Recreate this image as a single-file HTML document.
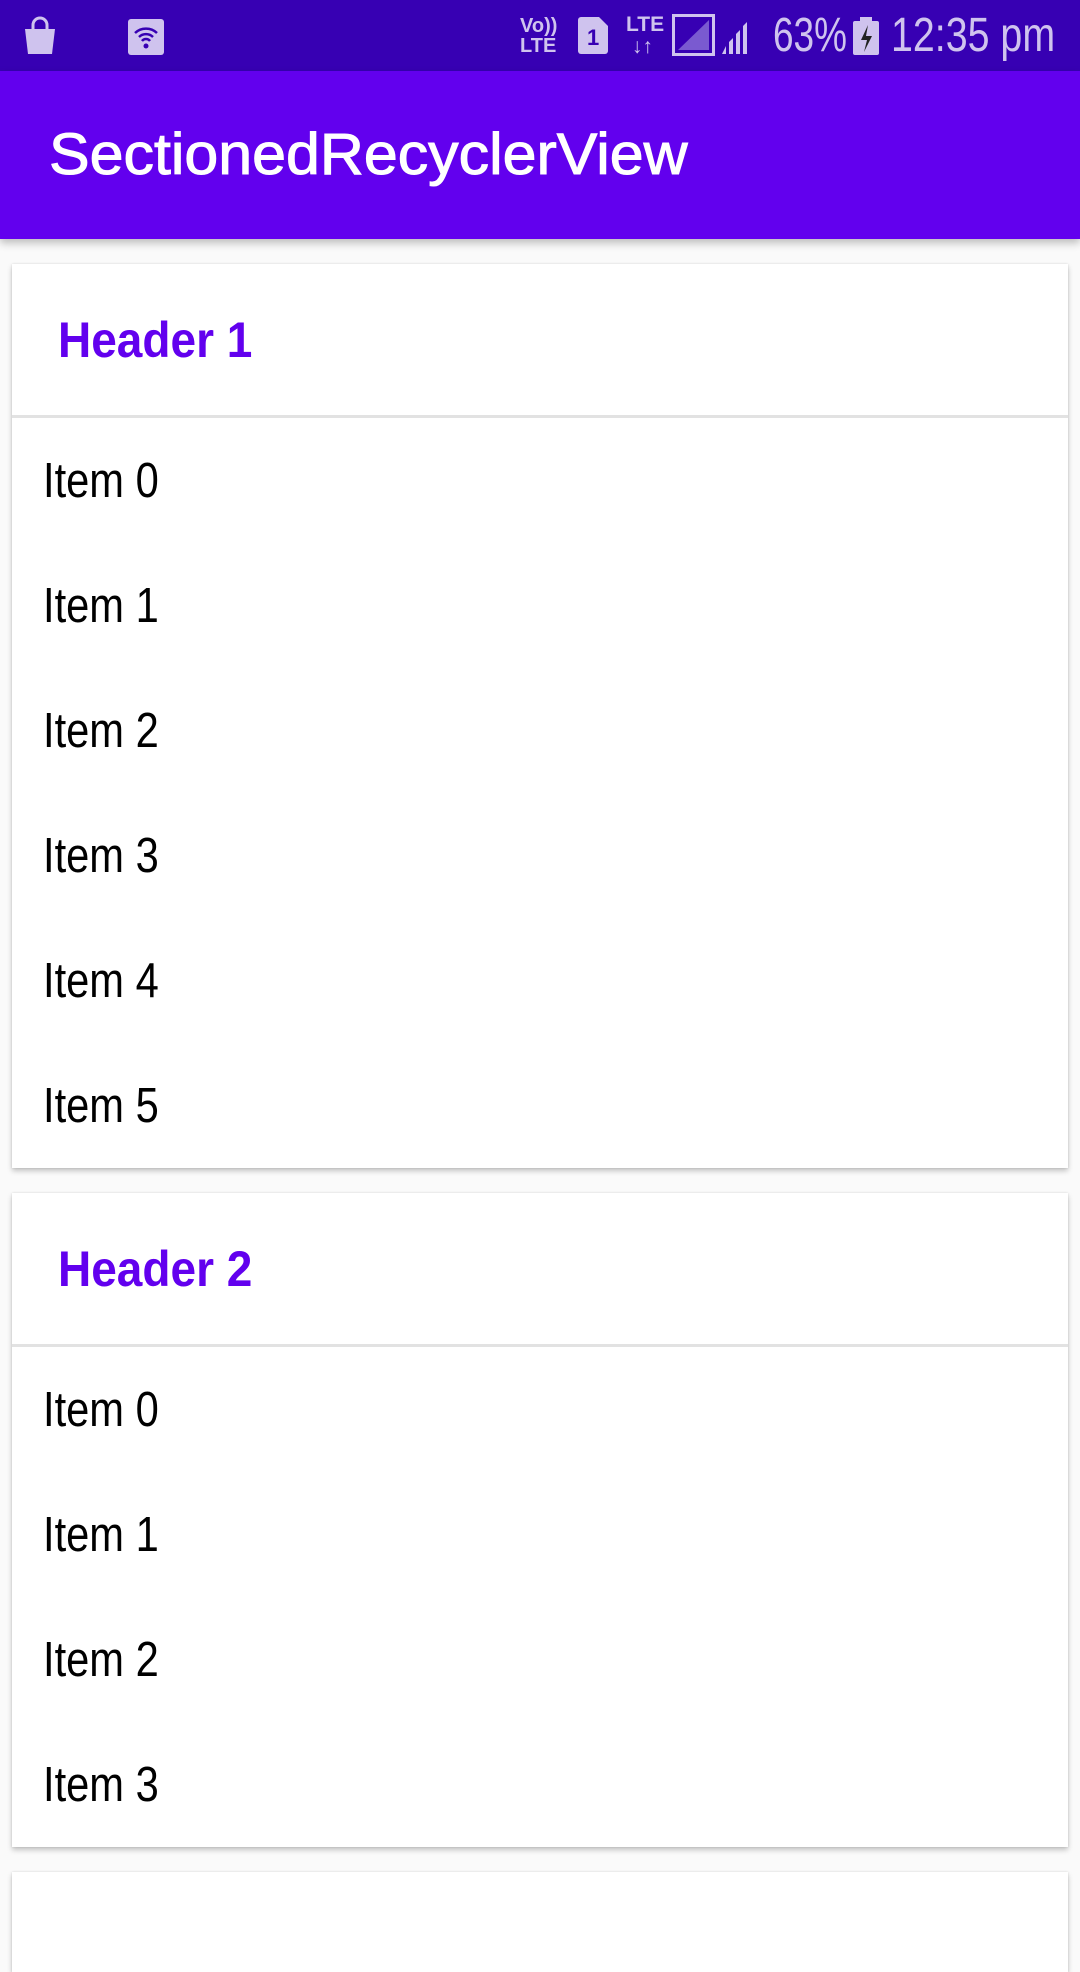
<!DOCTYPE html>
<html><head><meta charset="utf-8"><style>
*{margin:0;padding:0;box-sizing:border-box}
body{width:1080px;height:1920px;background:#fafafa;position:relative;overflow:hidden;font-family:"Liberation Sans",sans-serif}
.sb{position:absolute;left:0;top:0;width:1080px;height:71px;background:#3700B3;color:#cfc3ee}
.ab{position:absolute;left:0;top:71px;width:1080px;height:168px;background:#6200EE;box-shadow:0 4px 8px rgba(0,0,0,.25)}
.ab span{position:absolute;left:49px;top:55px;font-size:58px;line-height:1;color:#fff;transform:scaleX(1.05);transform-origin:left;white-space:nowrap;-webkit-text-stroke:1px #fff}
.card{position:absolute;left:12px;width:1056px;background:#fff;box-shadow:0 3px 5px rgba(0,0,0,.22),0 0 2px rgba(0,0,0,.12)}
.hd{height:154px;border-bottom:3px solid #e2e2e2;position:relative}
.hd span{position:absolute;left:46px;top:51px;font-size:50px;font-weight:bold;color:#6200EE;line-height:1;transform:scaleX(.92);transform-origin:left;white-space:nowrap}
.it{height:125px;position:relative}
.it span{position:absolute;left:31px;top:39px;font-size:49px;line-height:1;color:#000;transform:scaleX(.85);transform-origin:left;white-space:nowrap}
.t{position:absolute;top:10px;font-size:48px;line-height:52px;white-space:nowrap;transform-origin:left}
</style></head><body>
<div class="sb">
 <svg style="position:absolute;left:22px;top:16px" width="36" height="40" viewBox="0 0 36 40"><path d="M11 13V9a7 7 0 0 1 14 0v4" stroke="#cfc3ee" stroke-width="3" fill="none"/><path d="M3 13h30l-3 25H6z" fill="#cfc3ee"/></svg>
 <svg style="position:absolute;left:128px;top:19px" width="36" height="36" viewBox="0 0 36 36"><rect width="36" height="36" rx="3" fill="#cfc3ee"/><path d="M7 14a16 16 0 0 1 22 0M11 18a10 10 0 0 1 14 0M14 22a5 5 0 0 1 8 0" stroke="#3700B3" stroke-width="2.5" fill="none"/><circle cx="18" cy="27" r="2.5" fill="#3700B3"/></svg>
 <div class="t" style="left:520px;top:16px;font-size:20px;line-height:20px;font-weight:bold">Vo))<br>LTE</div>
 <svg style="position:absolute;left:578px;top:17px" width="30" height="37"><path d="M0 3a3 3 0 0 1 3-3h18l9 9v25a3 3 0 0 1-3 3H3a3 3 0 0 1-3-3z" fill="#cfc3ee"/><text x="9" y="28" font-size="22" font-weight="bold" fill="#3700B3" font-family="Liberation Sans">1</text></svg>
 <div class="t" style="left:626px;top:14px;font-size:21px;line-height:22px;font-weight:bold">LTE<br>&nbsp;↓↑</div>
 <svg style="position:absolute;left:672px;top:14px" width="92" height="42"><rect x="1.5" y="1.5" width="40" height="39" fill="none" stroke="#cfc3ee" stroke-width="3"/><path d="M6 36L37 6v30z" fill="#7a5ad0"/><path d="M50 40h4v-8zM57 40h4V24l-4 4zM64 40h4V16l-4 4zM71 40h4V8l-4 4z" fill="#cfc3ee"/></svg>
 <div class="t" style="left:773px;transform:scaleX(.77)">63%</div>
 <svg style="position:absolute;left:853px;top:17px" width="26" height="38"><rect x="7" y="0" width="12" height="5" fill="#cfc3ee"/><rect x="0" y="4" width="26" height="34" rx="2" fill="#cfc3ee"/><path d="M15 8l-7 15h6l-3 12 8-16h-6z" fill="#222"/></svg>
 <div class="t" style="left:891px;transform:scaleX(.82)">12:35 pm</div>
</div>
<div class="ab"><span>SectionedRecyclerView</span></div>
<div class="card" style="top:264px">
 <div class="hd"><span>Header 1</span></div>
 <div class="it"><span>Item 0</span></div><div class="it"><span>Item 1</span></div><div class="it"><span>Item 2</span></div><div class="it"><span>Item 3</span></div><div class="it"><span>Item 4</span></div><div class="it"><span>Item 5</span></div>
</div>
<div class="card" style="top:1193px">
 <div class="hd"><span>Header 2</span></div>
 <div class="it"><span>Item 0</span></div><div class="it"><span>Item 1</span></div><div class="it"><span>Item 2</span></div><div class="it"><span>Item 3</span></div>
</div>
<div class="card" style="top:1872px;height:100px"></div>
</body></html>
